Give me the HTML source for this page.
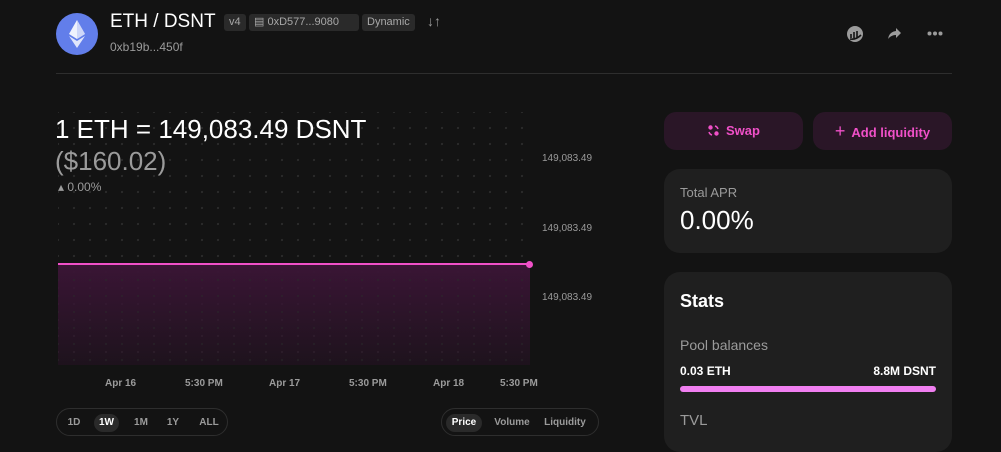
<!DOCTYPE html>
<html><head><meta charset="utf-8"><style>
*{margin:0;padding:0;box-sizing:border-box}
body{width:1001px;height:437px;background:#131313;font-family:"Liberation Sans",sans-serif;color:#fff;position:relative;overflow:hidden}
.a{position:absolute}
.tag{position:absolute;top:14px;height:17px;background:#2a2a2a;color:#a8a8a8;font-size:11px;line-height:17px;padding:0 5px;border-radius:3px}
.dots{background-image:radial-gradient(circle,#2a2a2a 1px,transparent 1.3px);background-size:16px 16px;background-position:-8px -8px}
.xl{position:absolute;top:378px;font-size:10px;color:#9b9b9b;font-weight:bold}
.yl{position:absolute;left:542px;font-size:10px;color:#9b9b9b}
.pill{position:absolute;border:1px solid #2e2e2e;border-radius:14px;height:28px}
.pill span{position:absolute;top:5px;height:18px;line-height:18px;font-size:10px;color:#9b9b9b;font-weight:bold;border-radius:9px;text-align:center}
.card{position:absolute;background:#1f1f1f;border-radius:16px}
.btn{position:absolute;top:112px;height:38px;background:#2a1627;border-radius:12px;color:#f050c8;font-weight:bold;font-size:13px;line-height:38px;text-align:center}
</style></head><body>
<div class="a" style="left:56px;top:13px;width:42px;height:42px;border-radius:50%;background:#627eea"></div>
<svg class="a" style="left:56px;top:13px" width="42" height="42" viewBox="0 0 42 42"><path d="M21 7 L29 21 L21 26 L13 21Z" fill="#fff" opacity=".9"/><path d="M21 28 L29 23 L21 35 L13 23Z" fill="#fff" opacity=".8"/><path d="M21 7 L21 26 L29 21Z" fill="#c1ccf7" opacity=".7"/></svg>
<div class="a" style="left:110px;top:11px;font-size:19px">ETH / DSNT</div>
<div class="tag" style="left:224px">v4</div>
<div class="tag" style="left:249px;width:110px">▤ 0xD577...9080</div>
<div class="tag" style="left:362px">Dynamic</div>
<div class="a" style="left:427px;top:13px;color:#9b9b9b;font-size:14px">↓↑</div>
<div class="a" style="left:110px;top:40px;font-size:12px;color:#9b9b9b">0xb19b...450f</div>
<svg class="a" style="left:846px;top:25px" width="18" height="18" viewBox="0 0 18 18"><circle cx="9" cy="9" r="8" fill="#9b9b9b"/><path d="M5 13V9M8 13V7M11 13V6M4 14Q10 15 15 10" stroke="#131313" stroke-width="1.6" fill="none"/></svg>
<svg class="a" style="left:887px;top:27px" width="15" height="13" viewBox="0 0 15 13"><path d="M9 1L14 6L9 11V8Q4 8 1 12Q2 5 9 4Z" fill="#9b9b9b"/></svg>
<svg class="a" style="left:927px;top:31px" width="16" height="5"><circle cx="2.5" cy="2.5" r="2" fill="#9b9b9b"/><circle cx="8" cy="2.5" r="2" fill="#9b9b9b"/><circle cx="13.5" cy="2.5" r="2" fill="#9b9b9b"/></svg>
<div class="a" style="left:56px;top:73px;width:896px;height:1px;background:#2e2e2e"></div>
<div class="a dots" style="left:58px;top:112px;width:472px;height:253px"></div>
<div class="a" style="left:58px;top:264px;width:472px;height:101px;background:linear-gradient(#3a1535,rgba(40,18,38,.5))"></div>
<div class="a dots" style="left:58px;top:264px;width:472px;height:101px;opacity:.5"></div>
<div class="a" style="left:58px;top:263px;width:472px;height:2px;background:#f050c8"></div>
<div class="a" style="left:526px;top:261px;width:7px;height:7px;border-radius:50%;background:#f050c8"></div>
<div class="a" style="left:55px;top:114px;font-size:26px">1 ETH = 149,083.49 DSNT</div>
<div class="a" style="left:55px;top:146px;font-size:26px;color:#9b9b9b">($160.02)</div>
<div class="a" style="left:58px;top:180px;font-size:12px;color:#9b9b9b">▴ 0.00%</div>
<div class="yl" style="top:153px">149,083.49</div>
<div class="yl" style="top:223px">149,083.49</div>
<div class="yl" style="top:292px">149,083.49</div>
<div class="xl" style="left:105px">Apr 16</div><div class="xl" style="left:185px">5:30 PM</div>
<div class="xl" style="left:269px">Apr 17</div><div class="xl" style="left:349px">5:30 PM</div>
<div class="xl" style="left:433px">Apr 18</div><div class="xl" style="left:500px">5:30 PM</div>
<div class="pill" style="left:56px;top:408px;width:172px">
<span style="left:6px;width:22px">1D</span><span style="left:37px;width:25px;background:#2a2a2a;color:#fff">1W</span><span style="left:73px;width:22px">1M</span><span style="left:105px;width:22px">1Y</span><span style="left:138px;width:28px">ALL</span></div>
<div class="pill" style="left:441px;top:408px;width:158px">
<span style="left:4px;width:36px;background:#2a2a2a;color:#fff">Price</span><span style="left:50px;width:40px">Volume</span><span style="left:100px;width:46px">Liquidity</span></div>
<div class="btn" style="left:664px;width:139px"><svg width="13" height="13" viewBox="0 0 13 13" style="vertical-align:-2px;margin-right:6px"><circle cx="3.5" cy="3.5" r="2.2" fill="#f050c8"/><circle cx="9.5" cy="9.5" r="2.2" fill="#f050c8"/><path d="M8 2A4.5 4.5 0 0 1 11 5M5 11A4.5 4.5 0 0 1 2 8" stroke="#f050c8" stroke-width="1.5" fill="none"/></svg>Swap</div>
<div class="btn" style="left:813px;width:139px"><span style="font-weight:normal;font-size:18px;margin-right:6px">+</span>Add liquidity</div>
<div class="card" style="left:664px;top:169px;width:288px;height:84px">
<div class="a" style="left:16px;top:16px;font-size:13px;color:#9b9b9b">Total APR</div>
<div class="a" style="left:16px;top:36px;font-size:26px">0.00%</div></div>
<div class="card" style="left:664px;top:272px;width:288px;height:180px">
<div class="a" style="left:16px;top:19px;font-size:18px;font-weight:bold">Stats</div>
<div class="a" style="left:16px;top:65px;font-size:14px;color:#9b9b9b">Pool balances</div>
<div class="a" style="left:16px;top:92px;font-size:12px;font-weight:bold">0.03 ETH</div>
<div class="a" style="right:16px;top:92px;font-size:12px;font-weight:bold">8.8M DSNT</div>
<div class="a" style="left:16px;top:114px;width:256px;height:6px;border-radius:3px;background:#f07ff0"></div>
<div class="a" style="left:16px;top:140px;font-size:15px;color:#9b9b9b">TVL</div></div>
</body></html>
